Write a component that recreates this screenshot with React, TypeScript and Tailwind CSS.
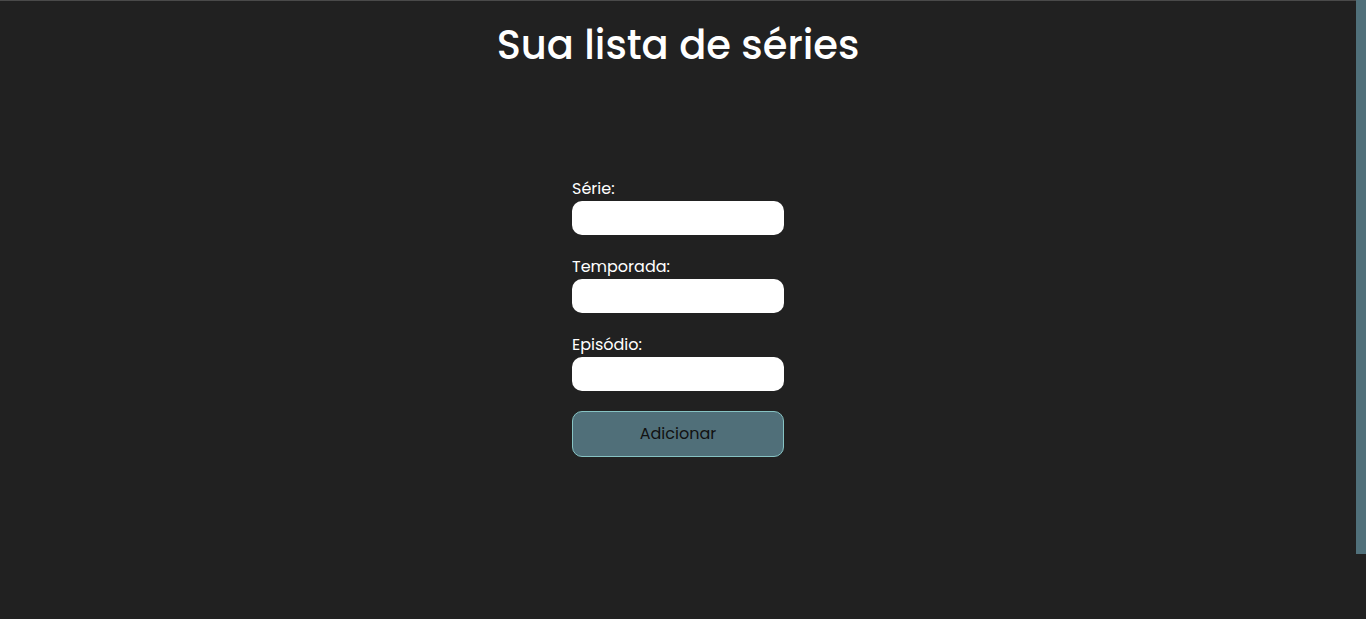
import React from "react";

const font = { fontFamily: "Poppins, 'DejaVu Sans', 'Noto Sans', sans-serif" };

function Field({ label }: { label: string }) {
  return (
    <div className="flex flex-col">
      <label className="text-[16px] leading-[20px] text-white">{label}</label>
      <input
        type="text"
        className="mt-[2px] h-[34px] w-[212px] rounded-[10px] bg-white outline-none px-3 text-black"
      />
    </div>
  );
}

export default function App() {
  return (
    <div className="flex h-[619px] w-full bg-[#212121] overflow-hidden" style={font}>
      <main className="flex-1 flex flex-col items-center border-t border-[#4a4a4a]">
        <h1 className="mt-[17px] text-[40px] leading-[54px] text-white font-medium">
          Sua lista de séries
        </h1>
        <form className="mt-[107px] flex flex-col gap-[22px] w-[212px]">
          <Field label="Série:" />
          <Field label="Temporada:" />
          <Field label="Episódio:" />
          <button
            type="button"
            className="mt-[-2px] h-[46px] w-[212px] rounded-[10px] bg-[#506f79] border border-[#86c3c3] text-[16px] text-[#111111]"
          >
            Adicionar
          </button>
        </form>
      </main>
      <div className="w-[10px] flex flex-col">
        <div className="h-[554px] bg-[#50707a]" />
      </div>
    </div>
  );
}
